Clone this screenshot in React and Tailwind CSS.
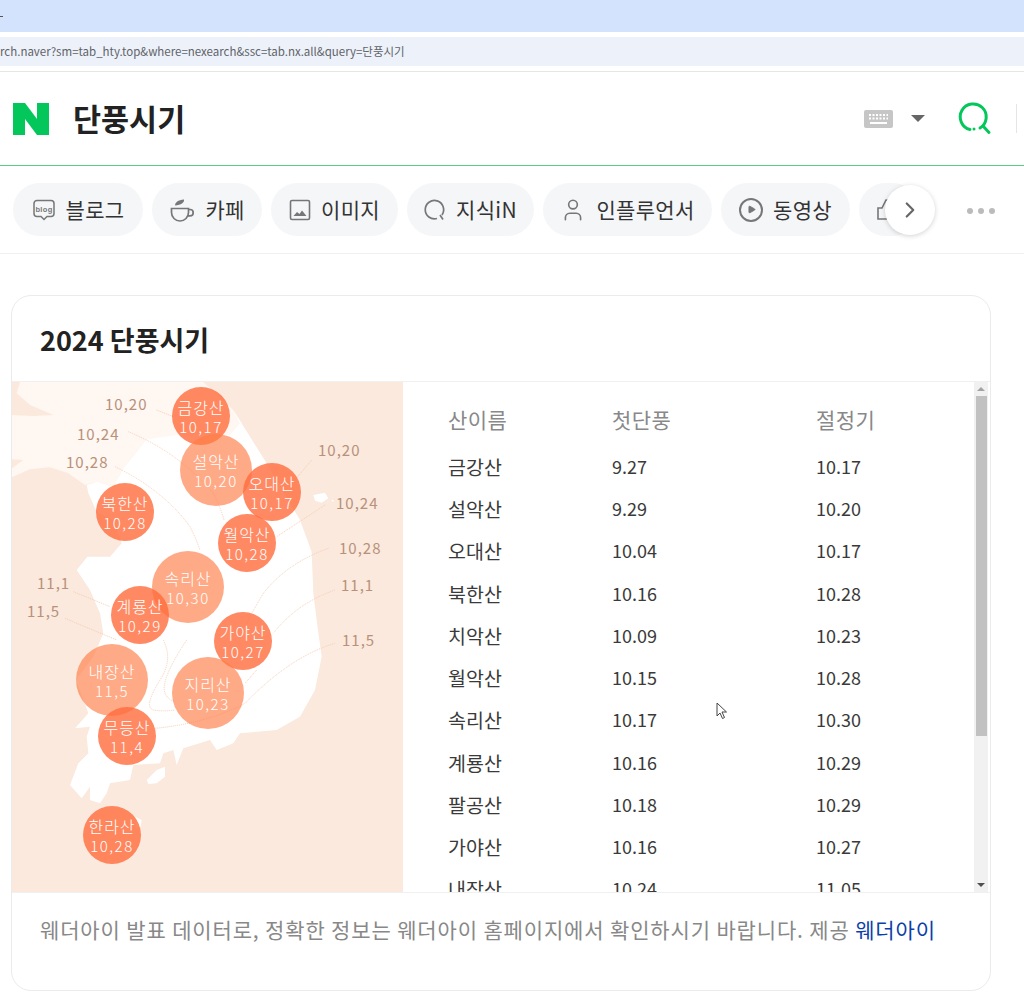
import React from 'react';
import { ChevronRight, Play, User } from 'lucide-react';

const chips = [
  { label: '블로그', icon: 'blog', width: 'w-[130px]' },
  { label: '카페', icon: 'cafe', width: 'w-[110px]' },
  { label: '이미지', icon: 'image', width: 'w-[127px]' },
  { label: '지식iN', icon: 'kin', width: 'w-[127px]' },
  { label: '인플루언서', icon: 'user', width: 'w-[169px]' },
  { label: '동영상', icon: 'play', width: 'w-[129px]' },
  { label: '', icon: 'shop', width: 'w-[60px] !justify-start pl-[17px]' },
];

const rows = [
  ['금강산', '9.27', '10.17'],
  ['설악산', '9.29', '10.20'],
  ['오대산', '10.04', '10.17'],
  ['북한산', '10.16', '10.28'],
  ['치악산', '10.09', '10.23'],
  ['월악산', '10.15', '10.28'],
  ['속리산', '10.17', '10.30'],
  ['계룡산', '10.16', '10.29'],
  ['팔공산', '10.18', '10.29'],
  ['가야산', '10.16', '10.27'],
  ['내장산', '10.24', '11.05'],
];

// x, y are the bubble centers inside the map panel
const bubbles = [
  { name: '금강산', date: '10,17', x: 189, y: 34, big: false },
  { name: '설악산', date: '10,20', x: 204, y: 88, big: true },
  { name: '오대산', date: '10,17', x: 260, y: 110, big: false },
  { name: '북한산', date: '10,28', x: 113, y: 130, big: false },
  { name: '월악산', date: '10,28', x: 235, y: 161, big: false },
  { name: '속리산', date: '10,30', x: 176, y: 205, big: true },
  { name: '계룡산', date: '10,29', x: 128, y: 233, big: false },
  { name: '가야산', date: '10,27', x: 231, y: 259, big: false },
  { name: '내장산', date: '11,5', x: 100, y: 298, big: true },
  { name: '지리산', date: '10,23', x: 196, y: 311, big: true },
  { name: '무등산', date: '11,4', x: 115, y: 354, big: false },
  { name: '한라산', date: '10,28', x: 100, y: 453, big: false },
];

const labels = [
  { text: '10,20', x: 93, y: 22 },
  { text: '10,24', x: 65, y: 52 },
  { text: '10,28', x: 54, y: 80 },
  { text: '11,1', x: 25, y: 201 },
  { text: '11,5', x: 15, y: 229 },
  { text: '10,20', x: 306, y: 68 },
  { text: '10,24', x: 324, y: 121 },
  { text: '10,28', x: 327, y: 166 },
  { text: '11,1', x: 329, y: 203 },
  { text: '11,5', x: 330, y: 258 },
];

const ChipIcon = ({ type }) => {
  if (type === 'blog') {
    return (
      <svg width="24" height="24" viewBox="0 0 24 24" fill="none" stroke="#777" strokeWidth="1.5">
        <path d="M5 2.5h14a3 3 0 0 1 3 3v10a3 3 0 0 1-3 3h-4l-3 3-3-3H5a3 3 0 0 1-3-3v-10a3 3 0 0 1 3-3z" />
        <text x="12" y="13.5" textAnchor="middle" fontSize="7.5" fontWeight="700" fill="#777" stroke="none" fontFamily="Liberation Sans, sans-serif">blog</text>
      </svg>
    );
  }
  if (type === 'cafe') {
    return (
      <svg width="26" height="26" viewBox="0 0 26 26" fill="none" stroke="#777" strokeWidth="1.7">
        <path d="M2.5 11.5h17v4a8.5 8.5 0 0 1-17 0z" />
        <path d="M19.5 12.5h1.5a3.2 3.2 0 0 1 0 6.4h-2" />
        <path d="M6 8.5c0-3 3-5.5 9-6 .6 3-3 5.5-9 6z" fill="#777" stroke="none" />
      </svg>
    );
  }
  if (type === 'image') {
    return (
      <svg width="22" height="22" viewBox="0 0 22 22" fill="none" stroke="#777" strokeWidth="1.6">
        <rect x="1.5" y="1.5" width="19" height="19" rx="1.5" />
        <path d="M4.5 17l3.5-4 2.5 2 2.5-3.5 4.5 5.5z" fill="#777" stroke="none" />
      </svg>
    );
  }
  if (type === 'kin') {
    return (
      <svg width="22" height="24" viewBox="0 0 22 24" fill="none" stroke="#777" strokeWidth="1.7">
        <path d="M13 20.5a9.2 9.2 0 1 1 5-3.6" />
        <path d="M16 17l3 4.5" />
      </svg>
    );
  }
  if (type === 'user') return <User size={26} color="#777" strokeWidth={1.5} />;
  if (type === 'play') {
    return (
      <span className="flex h-6 w-6 items-center justify-center rounded-full border-2 border-[#777]">
        <Play size={9} fill="#777" color="#777" />
      </span>
    );
  }
  return (
    <svg width="24" height="24" viewBox="0 0 24 24" fill="none" stroke="#777" strokeWidth="1.6">
      <path d="M2 10h4l4-8c2 0 3 1 3 3v3h8v13H2z" />
    </svg>
  );
};

// Drawn in 3x panel units so the outlines could be read straight off a zoomed crop
const MapDrawing = () => (
  <svg className="absolute inset-0" width="391" height="510" viewBox="36 6 1173 1530">
    <path
      fill="#fef7f2"
      d="M60 6H610L700 90L725 130L690 170H530L440 178L410 215L370 265L340 320L290 305L255 315L205 280L150 262L90 268L36 292V265L70 240L36 238V105L100 108L160 105L90 75L50 40Z"
    />
    <path
      fill="#fff"
      d="M690 165L720 130L700 90L800 250L900 420L935 515L940 640L950 720L965 830L945 930L900 1010L830 1050L720 1060L700 1090L650 1110L630 1080L550 1105L530 1155L520 1110L490 1120L480 1150L400 1155L390 1200L330 1210L320 1240L300 1270L270 1260L270 1220L245 1255L210 1215L235 1150L265 1120L260 1070L270 1040L225 1045L265 1000L228 900L280 830L310 760L300 700L270 630L230 570L262 530L330 530L365 490L340 420L290 395L265 340L260 315L290 305L340 320L370 265L410 215L440 178L530 165Z"
    />
    <path fill="#fff" d="M940 345L975 338L985 355L965 368L945 362Z" />
    <circle cx="998" cy="362" r="3" fill="#fff" />
    <path fill="#fff" d="M440 1200L470 1170L495 1160L495 1190L470 1210L445 1212Z" />
    <path fill="#fff" d="M405 1310L425 1320L422 1340L410 1345Z" />
    <g fill="none" stroke="#f9cdb5" strokeWidth="3" strokeDasharray="3 3">
      <path d="M470 90L520 110" />
      <path d="M385 155Q540 220 640 340Q665 390 672 420" />
      <path d="M345 260Q490 330 570 440Q590 480 600 510" />
      <path d="M220 635L330 680" />
      <path d="M195 715L350 780" />
      <path d="M490 780Q520 840 480 900Q430 980 460 990Q490 995 525 990" />
      <path d="M560 780Q480 900 495 940Q505 960 525 965" />
      <path d="M935 240L885 300" />
      <path d="M975 375L830 470" />
      <path d="M985 505Q860 550 790 640Q760 690 740 730" />
      <path d="M1005 630Q890 670 820 760" />
      <path d="M770 870L735 910" />
      <path d="M1005 790Q870 830 735 970Q620 1030 465 1045" />
    </g>
  </svg>
);

const MapPanel = () => (
  <div className="relative h-full w-[391px] shrink-0 overflow-hidden bg-[#fae9dc]">
    <MapDrawing />
    {labels.map((l) => (
      <span
        key={l.text + l.x}
        className="absolute text-[15px] leading-5 tracking-[1px] text-[#b9917b]"
        style={{ left: l.x, top: l.y - 10 }}
      >
        {l.text}
      </span>
    ))}
    {bubbles.map((b) => (
      <div
        key={b.name}
        className={`absolute flex -translate-x-1/2 -translate-y-1/2 flex-col items-center justify-center rounded-full pt-[1px] leading-[20px] font-light text-white ${
          b.big ? 'h-[72px] w-[72px] bg-[#ff7d45]/65' : 'h-[58px] w-[58px] bg-[#ff6b3c]/80'
        }`}
        style={{ left: b.x, top: b.y }}
      >
        <span className="text-[16px] tracking-[1px]">{b.name}</span>
        <span className="text-[15px] tracking-[1.5px]">{b.date}</span>
      </div>
    ))}
  </div>
);

const Scrollbar = () => (
  <div className="mr-[2px] flex h-full w-[14px] shrink-0 flex-col items-center bg-[#f1f1f1]">
    <div className="flex h-[14px] items-center justify-center">
      <div className="h-0 w-0 border-x-[4px] border-b-[4px] border-x-transparent border-b-[#a3a3a3]" />
    </div>
    <div className="h-[340px] w-[11px] bg-[#c1c1c1]" />
    <div className="flex-1" />
    <div className="flex h-[14px] items-center justify-center">
      <div className="h-0 w-0 border-x-[4px] border-t-[4px] border-x-transparent border-t-[#505050]" />
    </div>
  </div>
);

const App = () => {
  return (
    <div className="h-[1006px] w-[1024px] overflow-hidden bg-white font-['Noto_Sans_CJK_KR','Noto_Sans',sans-serif] text-[#222]">
      {/* Browser bars */}
      <div className="flex h-8 items-center bg-[#d3e3fd]">
        <div className="h-px w-[3px] bg-[#555]" />
      </div>
      <div className="mt-[5px] flex h-[29px] items-center bg-[#edf2fa] text-[11.5px] text-[#5f6368]">
        rch.naver?sm=tab_hty.top&amp;where=nexearch&amp;ssc=tab.nx.all&amp;query=단풍시기
      </div>

      {/* Search header */}
      <div className="mt-[5px] flex h-[95px] items-center border-y border-t-[#e6e6e6] border-b-[#5ec78a] pl-[13px]">
        <svg width="36" height="32" viewBox="0 0 36 32" className="shrink-0">
          <path d="M0 0h12l12 16V0h12v32H24L12 16v16H0z" fill="#03c75a" />
        </svg>
        <h1 className="ml-6 text-[30.5px] leading-none font-bold text-[#222]">단풍시기</h1>
        <div className="flex-1" />
        <svg width="29" height="18" viewBox="0 0 29 18" className="shrink-0">
          <rect width="29" height="18" rx="2" fill="#c6c6c6" />
          <path d="M5 5h19M5 8.5h19" stroke="#fff" strokeWidth="2" strokeDasharray="2 1.5" />
          <path d="M6 13h17" stroke="#fff" strokeWidth="2" />
        </svg>
        <div className="ml-[18px] h-0 w-0 border-x-[7px] border-t-[7px] border-x-transparent border-t-[#666]" />
        <svg width="36" height="36" viewBox="0 0 36 36" className="ml-[32px] shrink-0" fill="none" stroke="#03c75a" strokeWidth="3" strokeLinecap="round">
          <path d="M13 28.5a13 13 0 1 1 10-1.5" />
          <path d="M26 25l6 6.5" />
          <circle cx="17" cy="28" r="1.5" fill="#03c75a" stroke="none" />
        </svg>
        <div className="ml-[23px] h-[29px] w-px bg-[#e5e5e5]" />
        <div className="w-[7px]" />
      </div>

      {/* Tabs */}
      <div className="relative flex h-[88px] items-center border-b border-[#f0f0f0] pl-[13px]">
        <div className="flex w-[897px] gap-[9px] overflow-hidden">
          {chips.map((c) => (
            <div key={c.icon} className={`flex h-[53px] ${c.width} shrink-0 items-center justify-center gap-[10px] rounded-full bg-[#f5f6f8] text-[21px] tracking-[0.3px] text-[#333]`}>
              <ChipIcon type={c.icon} />
              {c.label && <span>{c.label}</span>}
            </div>
          ))}
        </div>
        <div className="absolute top-[19px] left-[885px] flex h-[50px] w-[50px] items-center justify-center rounded-full bg-white shadow-[0_1px_5px_rgba(0,0,0,0.18)]">
          <ChevronRight size={26} color="#666" strokeWidth={2} />
        </div>
        <div className="absolute top-[42px] left-[967px] flex gap-[5px]">
          <div className="h-[6px] w-[6px] rounded-full bg-[#bbb]" />
          <div className="h-[6px] w-[6px] rounded-full bg-[#bbb]" />
          <div className="h-[6px] w-[6px] rounded-full bg-[#bbb]" />
        </div>
      </div>

      {/* Card */}
      <div className="mt-[41px] ml-[11px] flex h-[696px] w-[980px] flex-col overflow-hidden rounded-[20px] border border-[#ebebeb]">
        <div className="flex h-[86px] shrink-0 items-center border-b border-[#f0f0f0] pt-1 pl-[28px] text-[27px] font-bold text-[#222]">
          2024 단풍시기
        </div>
        <div className="relative flex h-[510px] shrink-0">
          <MapPanel />
          <div className="h-full flex-1 overflow-hidden pt-4 pl-[45px]">
            <div className="flex h-[47.3px] items-start text-[21px] leading-[42px] tracking-[0.4px] text-[#888]">
              <div className="w-[164px]">산이름</div>
              <div className="w-[204px]">첫단풍</div>
              <div>절정기</div>
            </div>
            {rows.map((r) => (
              <div key={r[0]} className="flex h-[42.25px] items-center text-[18px] text-[#3a3a3a]">
                <div className="w-[164px] text-[19.5px]">{r[0]}</div>
                <div className="w-[204px]">{r[1]}</div>
                <div>{r[2]}</div>
              </div>
            ))}
          </div>
          <Scrollbar />
          {/* mouse pointer caught in the capture */}
          <svg className="absolute top-[320px] left-[704px]" width="12" height="18" viewBox="0 0 12 18">
            <path d="M1 1v13l3-3 2.5 5.5 2-1L6 10h4.5z" fill="#fff" stroke="#444" strokeWidth="1" />
          </svg>
        </div>
        <div className="flex-1 border-t border-[#f0f0f0] pt-[21px] pl-[28px] text-[21px] leading-[30px] tracking-[0.85px] text-[#888]">
          웨더아이 발표 데이터로, 정확한 정보는 웨더아이 홈페이지에서 확인하시기 바랍니다. 제공 <span className="text-[#0b3fa8]">웨더아이</span>
        </div>
      </div>
    </div>
  );
};

export default App;
